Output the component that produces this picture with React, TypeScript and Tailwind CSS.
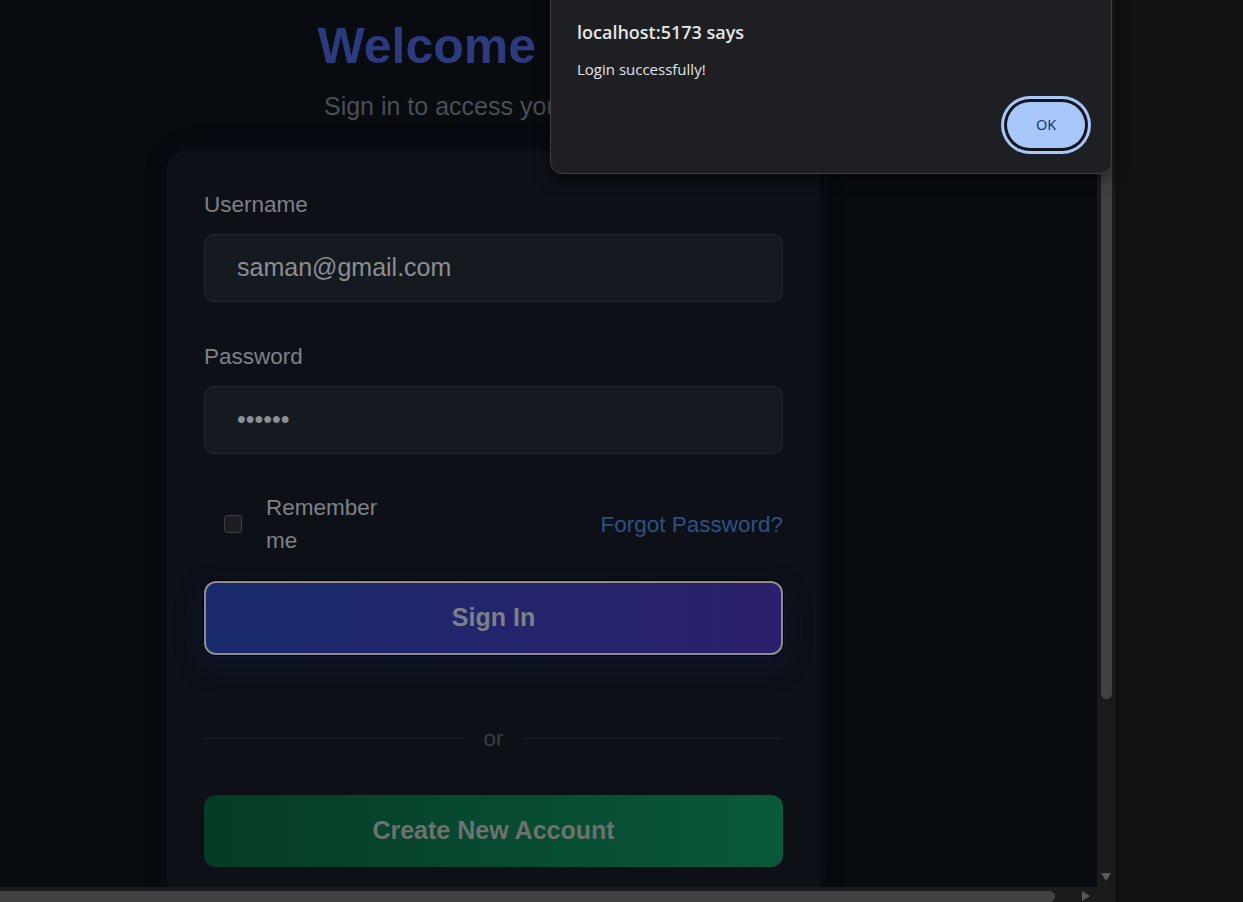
import React from "react";

const Field = ({ label, type, value }: { label: string; type: string; value: string }) => {
  return (
    <div>
      <label className="block text-[22.5px] leading-[33.75px] text-[#7e8187]">{label}</label>
      <input
        type={type}
        value={value}
        readOnly
        className="mt-[12px] block w-full h-[68px] rounded-[10px] border border-[#22262e] bg-[#151920] pl-[32px] text-[25px] text-[#8b8e93] outline-none"
      />
    </div>
  );
};

const LoginPage = () => {
  return (
    <div className="ml-[167px] w-[653px] pt-[16px]">
      <h1 className="text-center text-[50px] leading-[60px] font-bold text-[#2c3a7e]">Welcome Back</h1>
      <p className="mt-[12px] text-center text-[25px] leading-[37.5px] text-[#4b4e55]">
        Sign in to access your account
      </p>

      <div className="mt-[24.5px] rounded-[20px] bg-[#0d1017] px-[37px] pt-[38px] pb-[40px] shadow-[0_0_30px_rgba(40,50,90,0.08)]">
        <Field label="Username" type="text" value="saman@gmail.com" />
        <div className="mt-[38px]">
          <Field label="Password" type="password" value="123456" />
        </div>

        <div className="mt-[37px] flex items-center justify-between">
          <label className="flex items-center">
            <span className="ml-[20px] w-[18px] h-[18px] rounded-[3px] border border-[#3d3f43] bg-[#1c1e22]" />
            <span className="ml-[24px] w-[120px] text-[22.5px] leading-[33.75px] text-[#7e8187]">Remember me</span>
          </label>
          <a className="pt-[2px] text-[22.5px] leading-[33.75px] text-[#2c5283]">Forgot Password?</a>
        </div>

        <button className="mt-[23px] w-full h-[74px] rounded-[12px] border-2 border-[#8d8d90] bg-gradient-to-r from-[#182a6c] to-[#2a1f6a] text-[25px] font-bold text-[#7e8088] ring-1 ring-black shadow-[0_10px_30px_rgba(25,40,120,0.25)]">
          Sign In
        </button>

        <div className="mt-[67px] flex items-center gap-[20px]">
          <div className="h-px flex-1 bg-[#1c2029]" />
          <span className="text-[22.5px] leading-[33.75px] text-[#3b3e44]">or</span>
          <div className="h-px flex-1 bg-[#1c2029]" />
        </div>

        <button className="mt-[39px] w-full h-[72px] rounded-[12px] bg-gradient-to-r from-[#053b25] to-[#09593a] text-[25px] font-bold text-[#6d726f]">
          Create New Account
        </button>
      </div>
    </div>
  );
};

const AlertDialog = () => {
  return (
    <div
      className="absolute left-[550px] top-[-20px] w-[562px] h-[194px] rounded-[12px] border border-[#3f4246] bg-[#1d1f23] px-[26px] pt-[39px] shadow-[0_4px_16px_rgba(0,0,0,0.5)]"
      style={{ fontFamily: '"Open Sans", "Noto Sans", sans-serif' }}
    >
      <div className="text-[18px] leading-[24px] font-semibold text-[#e6e6e6]">localhost:5173 says</div>
      <div className="mt-[15px] text-[15px] leading-[20px] text-[#e3e3e3]">Login successfully!</div>
      <div className="mt-[23px] flex justify-end">
        <button className="w-[78px] h-[46px] rounded-full bg-[#a8c7fa] text-[14.5px] font-medium text-[#062e6f] shadow-[0_0_0_3px_#141619,0_0_0_6px_#a8c7fa]">
          OK
        </button>
      </div>
    </div>
  );
};

const App = () => {
  return (
    <div
      className="relative w-[1243px] h-[902px] overflow-hidden bg-[#111111] flex"
      style={{ fontFamily: '"Liberation Sans", Arial, sans-serif' }}
    >
      <div className="w-[1115px] flex flex-col">
        <div className="flex h-[887px]">
          <main className="w-[1097px] h-full overflow-hidden bg-[#080b10]">
            <LoginPage />
          </main>
          {/* vertical scrollbar */}
          <div className="w-[18px] h-full bg-[#1b1b1b] flex flex-col items-center pt-[17px] pb-[6px]">
            <div className="w-[11px] h-[682px] rounded-full bg-[#414141]" />
            <div className="flex-1" />
            <div className="w-0 h-0 border-l-[5px] border-r-[5px] border-t-[8px] border-l-transparent border-r-transparent border-t-[#595959]" />
          </div>
        </div>
        {/* horizontal scrollbar */}
        <div className="h-[15px] flex bg-[#1b1b1b]">
          <div className="flex-1 flex items-end">
            <div className="w-[1055px] h-[11px] rounded-r-full bg-[#414141]" />
            <div className="flex-1" />
            <div className="mr-[7px] mb-[1px] w-0 h-0 border-t-[5px] border-b-[5px] border-l-[8px] border-t-transparent border-b-transparent border-l-[#595959]" />
          </div>
          <div className="w-[18px]" />
        </div>
      </div>
      <AlertDialog />
    </div>
  );
};

export default App;
